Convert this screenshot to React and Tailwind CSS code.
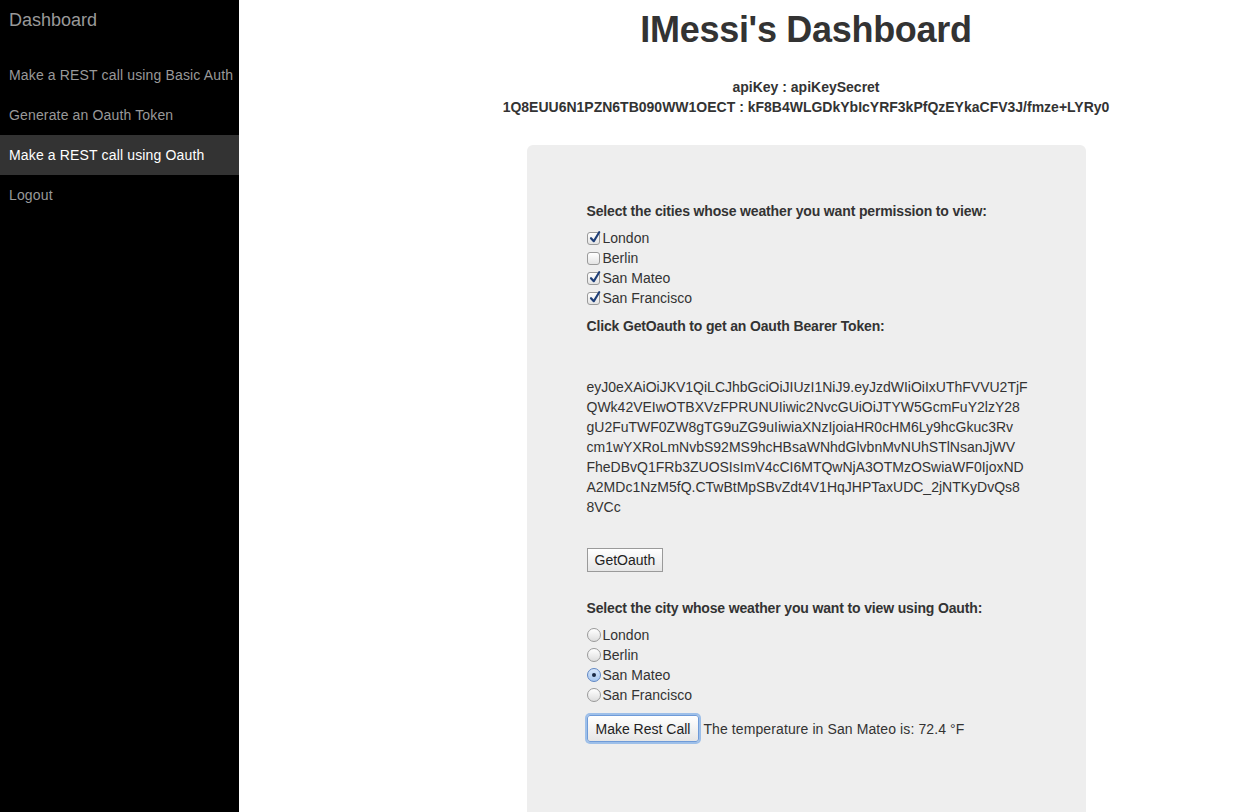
import React from "react";

const font = { fontFamily: '"Liberation Sans", Arial, Helvetica, sans-serif' };

function Check({ checked }) {
  return (
    <span className="relative inline-block w-[13px] h-[13px] mr-[3px] rounded-[3px] border border-[#9a9a9a] bg-gradient-to-b from-white to-[#e4e4e4] shrink-0">
      {checked && (
        <svg className="absolute left-[1px] top-[-3px]" width="12" height="14" viewBox="0 0 12 14">
          <path d="M2 8.2 L4.8 11.2 L10.2 2.2" fill="none" stroke="#1f3f78" strokeWidth="2.2" strokeLinecap="round" strokeLinejoin="round" />
        </svg>
      )}
    </span>
  );
}

function Radio({ checked }) {
  return checked ? (
    <span className="inline-flex items-center justify-center w-[14px] h-[14px] mr-[2px] rounded-full border border-[#5f86c4] bg-gradient-to-b from-[#d6e6fb] to-[#a9c8ef] shrink-0">
      <span className="w-[4px] h-[4px] rounded-full bg-[#1a2a44]" />
    </span>
  ) : (
    <span className="inline-block w-[14px] h-[14px] mr-[2px] rounded-full border border-[#9a9a9a] bg-gradient-to-b from-white to-[#dedede] shrink-0" />
  );
}

const tokenLines = [
  "eyJ0eXAiOiJKV1QiLCJhbGciOiJIUzI1NiJ9.eyJzdWIiOiIxUThFVVU2TjF",
  "QWk42VEIwOTBXVzFPRUNUIiwic2NvcGUiOiJTYW5GcmFuY2lzY28",
  "gU2FuTWF0ZW8gTG9uZG9uIiwiaXNzIjoiaHR0cHM6Ly9hcGkuc3Rv",
  "cm1wYXRoLmNvbS92MS9hcHBsaWNhdGlvbnMvNUhSTlNsanJjWV",
  "FheDBvQ1FRb3ZUOSIsImV4cCI6MTQwNjA3OTMzOSwiaWF0IjoxND",
  "A2MDc1NzM5fQ.CTwBtMpSBvZdt4V1HqJHPTaxUDC_2jNTKyDvQs8",
  "8VCc",
];

export default function App() {
  const cities = [
    ["London", true],
    ["Berlin", false],
    ["San Mateo", true],
    ["San Francisco", true],
  ];
  const radios = [
    ["London", false],
    ["Berlin", false],
    ["San Mateo", true],
    ["San Francisco", false],
  ];
  return (
    <div className="flex w-[1239px] h-[812px] overflow-hidden bg-white text-[#333] text-[14px] leading-[20px]" style={font}>
      <aside className="w-[239px] shrink-0 bg-black h-full">
        <div className="h-[55px] pl-[9px] pt-[9px] text-[18px] leading-[22px] text-[#999]">Dashboard</div>
        <nav className="flex flex-col tracking-[0.15px]">
          <a className="h-[40px] flex items-center pl-[9px] text-[#999]">Make a REST call using Basic Auth</a>
          <a className="h-[40px] flex items-center pl-[9px] text-[#999]">Generate an Oauth Token</a>
          <a className="h-[40px] flex items-center pl-[9px] text-white bg-[#333]">Make a REST call using Oauth</a>
          <a className="h-[40px] flex items-center pl-[9px] text-[#999]">Logout</a>
        </nav>
      </aside>
      <main className="flex-1 pl-[134px] flex flex-col items-center">
        <h1 className="mt-[10px] text-[36px] leading-[40px] font-bold text-[#333] tracking-[-0.3px]">IMessi's Dashboard</h1>
        <div className="mt-[27px] text-center font-bold text-[14px] leading-[20px]">
          <div>apiKey : apiKeySecret</div>
          <div>1Q8EUU6N1PZN6TB090WW1OECT : kF8B4WLGDkYbIcYRF3kPfQzEYkaCFV3J/fmze+LYRy0</div>
        </div>
        <section className="mt-[28px] w-[559px] min-h-[700px] rounded-[6px] bg-[#eeeeee] px-[60px] pt-[56px]">
          <div className="font-bold tracking-[-0.15px]">Select the cities whose weather you want permission to view:</div>
          <div className="mt-[7px] flex flex-col">
            {cities.map(([c, on]) => (
              <label key={c} className="h-[20px] flex items-center">
                <Check checked={on} />
                <span>{c}</span>
              </label>
            ))}
          </div>
          <div className="mt-[8px] font-bold tracking-[-0.15px]">Click GetOauth to get an Oauth Bearer Token:</div>
          <div className="mt-[41px]">
            {tokenLines.map((l) => (
              <div key={l}>{l}</div>
            ))}
          </div>
          <button className="mt-[31px] h-[24px] px-[7px] border border-[#9a9a9a] bg-gradient-to-b from-white to-[#e6e6e6] text-[14px] leading-[20px] text-[#222]">
            GetOauth
          </button>
          <div className="mt-[26px] font-bold tracking-[-0.15px]">Select the city whose weather you want to view using Oauth:</div>
          <div className="mt-[7px] flex flex-col">
            {radios.map(([c, on]) => (
              <label key={c} className="h-[20px] flex items-center">
                <Radio checked={on} />
                <span>{c}</span>
              </label>
            ))}
          </div>
          <div className="mt-[10px] flex items-center">
            <button className="h-[27px] px-[8px] rounded-[3px] border border-[#6f9bd8] shadow-[0_0_0_2px_#9dbfe9] bg-gradient-to-b from-white to-[#e6e6e6] text-[14px] leading-[20px] text-[#222]">
              Make Rest Call
            </button>
            <span className="ml-[4px] tracking-[0.1px]">The temperature in San Mateo is: 72.4 °F</span>
          </div>
        </section>
      </main>
    </div>
  );
}
